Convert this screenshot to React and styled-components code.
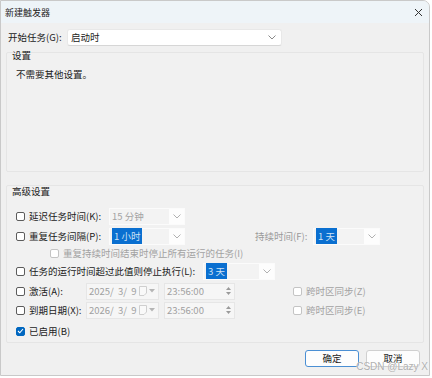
import React from "react";
import styled, { createGlobalStyle } from "styled-components";

const GlobalStyle = createGlobalStyle`
  html, body { margin: 0; padding: 0; background: #ffffff; }
  body {
    font-family: "Noto Sans CJK SC", "Noto Sans", sans-serif;
    font-size: 9.5px;
    color: #1b1b1b;
  }
`;

const Window = styled.div`
  position: relative;
  width: 430px;
  height: 376px;
  box-sizing: border-box;
  border: 1px solid #c9c9c9;
  border-radius: 0 7px 0 0;
  background: #f0f0f0;
  display: flex;
  flex-direction: column;
  overflow: hidden;
`;

const TitleBar = styled.div`
  height: 22px;
  flex: none;
  background: #eef4f8;
  display: flex;
  align-items: center;
  justify-content: space-between;
  padding: 0 6px 0 4px;
  font-size: 9px;
  color: #222;
`;

const Body = styled.div`
  flex: 1;
  display: flex;
  flex-direction: column;
  padding: 6px 5px 0 5px;
`;

const TopRow = styled.div`
  display: flex;
  align-items: center;
  height: 17px;
`;

const FieldLabel = styled.span`
  width: ${(p) => p.$w}px;
  flex: none;
  padding-left: ${(p) => p.$pl || 0}px;
  margin-left: ${(p) => p.$ml || 0}px;
  box-sizing: border-box;
  line-height: 11px;
  white-space: nowrap;
  color: ${(p) => (p.$muted ? "#9a9a9a" : "#1b1b1b")};
`;

const Select = styled.div`
  width: 215px;
  height: 17px;
  box-sizing: border-box;
  background: #ffffff;
  border: 1px solid #e8e8e8;
  border-bottom-color: #d6d6d6;
  border-radius: 3px;
  display: flex;
  align-items: center;
  justify-content: space-between;
  padding: 0 5px 0 3px;
  line-height: 11px;
`;

const Group = styled.div`
  margin-top: ${(p) => p.$mt}px;
  height: ${(p) => p.$h}px;
  flex: none;
  box-sizing: border-box;
  border: 1px solid #e5e5e5;
  border-radius: 2px;
  background: #f1f1f1;
  display: flex;
  flex-direction: column;
`;

const GroupTitle = styled.div`
  margin-top: ${(p) => p.$mt || 0}px;
  padding-left: 5px;
  line-height: 11px;
`;

const Note = styled.div`
  margin-top: 8px;
  padding-left: 9px;
  line-height: 11px;
`;

const Row = styled.div`
  display: flex;
  align-items: center;
  height: ${(p) => p.$h || 18}px;
  margin-top: ${(p) => p.$mt}px;
  padding-left: 9px;
`;

const CheckItem = styled.label`
  display: flex;
  align-items: center;
  gap: 4px;
  flex: none;
  width: ${(p) => (p.$w ? `${p.$w}px` : "auto")};
  margin-left: ${(p) => p.$ml || 0}px;
  line-height: 11px;
  white-space: nowrap;
  color: ${(p) => (p.$muted ? "#a2a2a2" : "#1b1b1b")};
`;

const Box = styled.span`
  width: 9px;
  height: 9px;
  flex: none;
  box-sizing: border-box;
  border-radius: 2px;
  border: 1px solid ${(p) => (p.$checked ? "#0067c0" : p.$muted ? "#c4c4c4" : "#5c5c5c")};
  background: ${(p) => (p.$checked ? "#0067c0" : "#ffffff")};
  display: flex;
  align-items: center;
  justify-content: center;
`;

const Combo = styled.div`
  width: ${(p) => p.$w}px;
  height: 17px;
  flex: none;
  box-sizing: border-box;
  border: 1px solid #fbfbfb;
  background: #f3f3f3;
  display: flex;
  align-items: center;
  color: #a3a3a3;
  line-height: 11px;
`;

const ComboText = styled.span`
  flex: 1;
  padding-left: 2px;
  white-space: nowrap;
`;

const Picked = styled.span`
  background: #0a6fd0;
  color: #cfe2f5;
  padding: 1px 2px;
`;

const ComboArrow = styled.span`
  width: 15px;
  height: 100%;
  background: #fdfdfd;
  display: flex;
  align-items: center;
  justify-content: center;
`;

const DateBox = styled.div`
  width: ${(p) => p.$w}px;
  height: 17px;
  flex: none;
  box-sizing: border-box;
  margin-left: ${(p) => p.$ml || 0}px;
  border: 1px solid #e6e6e6;
  background: #f6f6f6;
  display: flex;
  align-items: center;
  justify-content: space-between;
  padding: 0 3px 0 2px;
  color: #a0a0a0;
  line-height: 11px;
  white-space: pre;
`;

const Tools = styled.span`
  display: flex;
  align-items: center;
  gap: 2px;
`;

const Spin = styled.span`
  display: flex;
  flex-direction: column;
  gap: 2px;
  align-items: center;
`;

const ButtonRow = styled.div`
  margin-top: 7px;
  display: flex;
  justify-content: flex-end;
  gap: 7px;
  padding-right: 4px;
`;

const Button = styled.button`
  width: 54px;
  height: 17px;
  box-sizing: border-box;
  padding: 0;
  border-radius: 3px;
  border: 1px solid ${(p) => (p.$primary ? "#4a8fd4" : "#d0d0d0")};
  background: #fdfdfd;
  font-family: inherit;
  font-size: 9.5px;
  line-height: 11px;
  color: #1b1b1b;
`;

const Watermark = styled.span`
  position: absolute;
  right: 1px;
  bottom: 3px;
  font-family: "Liberation Sans", sans-serif;
  font-size: 10px;
  color: rgba(160, 160, 160, 0.85);
  text-shadow: 0 0 1px #ffffff;
  pointer-events: none;
`;

const Chevron = ({ color = "#8a8a8a" }) => (
  <svg width="8" height="5" viewBox="0 0 8 5">
    <polyline points="0.5,0.5 4,4 7.5,0.5" fill="none" stroke={color} strokeWidth="1" />
  </svg>
);

const Check = ({ checked, muted, children, ...rest }) => (
  <CheckItem $muted={muted} {...rest}>
    <Box $checked={checked} $muted={muted}>
      {checked && (
        <svg width="7" height="6" viewBox="0 0 7 6">
          <polyline points="1,3 2.8,4.8 6,1" fill="none" stroke="#ffffff" strokeWidth="1.1" />
        </svg>
      )}
    </Box>
    {children}
  </CheckItem>
);

const Dropdown = ({ w, value, picked }) => (
  <Combo $w={w}>
    <ComboText>{picked ? <Picked>{value}</Picked> : value}</ComboText>
    <ComboArrow>
      <Chevron color="#b0b0b0" />
    </ComboArrow>
  </Combo>
);

const DateField = ({ value }) => (
  <DateBox $w={73}>
    <span>{value}</span>
    <Tools>
      <svg width="8" height="10" viewBox="0 0 8 10">
        <path d="M0.5 0.5 H7.5 V7 L5 9.5 H0.5 Z" fill="#f9f9f9" stroke="#cfcfcf" />
      </svg>
      <svg width="6" height="4" viewBox="0 0 6 4">
        <polygon points="0,0 6,0 3,3.5" fill="#b5b5b5" />
      </svg>
    </Tools>
  </DateBox>
);

const TimeField = ({ value }) => (
  <DateBox $w={71} $ml={5}>
    <span>{value}</span>
    <Spin>
      <svg width="5" height="3" viewBox="0 0 5 3">
        <polygon points="0,3 5,3 2.5,0" fill="#9a9a9a" />
      </svg>
      <svg width="5" height="3" viewBox="0 0 5 3">
        <polygon points="0,0 5,0 2.5,3" fill="#9a9a9a" />
      </svg>
    </Spin>
  </DateBox>
);

export default function App() {
  return (
    <>
      <GlobalStyle />
      <Window>
        <TitleBar>
          <span>新建触发器</span>
          <svg width="9" height="9" viewBox="0 0 9 9">
            <path d="M1 1 L8 8 M8 1 L1 8" stroke="#333" strokeWidth="1" />
          </svg>
        </TitleBar>
        <Body>
          <TopRow>
            <FieldLabel $w={61} $pl={2}>开始任务(G):</FieldLabel>
            <Select>
              <span>启动时</span>
              <Chevron />
            </Select>
          </TopRow>

          <Group $mt={6} $h={120}>
            <GroupTitle $mt={-3}>设置</GroupTitle>
            <Note>不需要其他设置。</Note>
          </Group>

          <Group $mt={13} $h={158}>
            <GroupTitle>高级设置</GroupTitle>
            <Row $mt={10}>
              <Check $w={93}>延迟任务时间(K):</Check>
              <Dropdown w={76} value="15 分钟" />
            </Row>
            <Row $mt={2}>
              <Check $w={93}>重复任务间隔(P):</Check>
              <Dropdown w={76} value="1 小时" picked />
              <FieldLabel $w={58} $ml={70} $muted>
                持续时间(F):
              </FieldLabel>
              <Dropdown w={67} value="1 天" picked />
            </Row>
            <Row $mt={2} $h={12}>
              <Check muted $ml={34}>
                重复持续时间结束时停止所有运行的任务(I)
              </Check>
            </Row>
            <Row $mt={3}>
              <Check $w={187}>任务的运行时间超过此值则停止执行(L):</Check>
              <Dropdown w={72} value="3 天" picked />
            </Row>
            <Row $mt={2}>
              <Check $w={70}>激活(A):</Check>
              <DateField value={"2025/  3/  9"} />
              <TimeField value="23:56:00" />
              <Check muted $ml={58}>
                跨时区同步(Z)
              </Check>
            </Row>
            <Row $mt={1}>
              <Check $w={70}>到期日期(X):</Check>
              <DateField value={"2026/  3/  9"} />
              <TimeField value="23:56:00" />
              <Check muted $ml={58}>
                跨时区同步(E)
              </Check>
            </Row>
            <Row $mt={5} $h={14}>
              <Check checked>已启用(B)</Check>
            </Row>
          </Group>

          <ButtonRow>
            <Button $primary>确定</Button>
            <Button>取消</Button>
          </ButtonRow>
        </Body>
        <Watermark>CSDN @Lazy X</Watermark>
      </Window>
    </>
  );
}
